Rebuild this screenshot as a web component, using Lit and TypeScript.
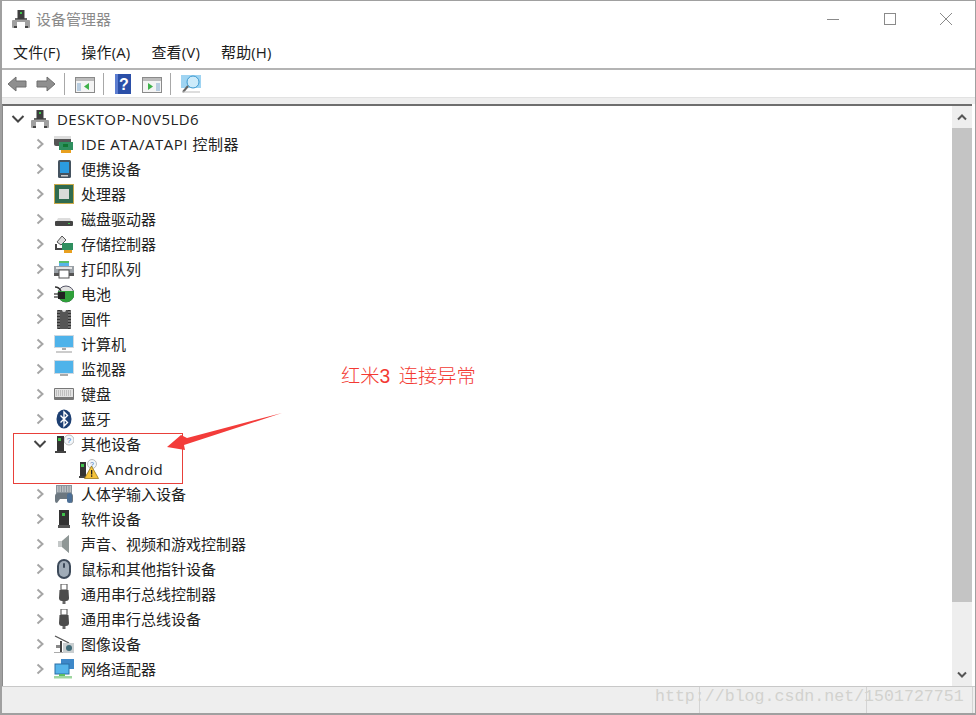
import { LitElement, html, css, svg } from "lit";
import { customElement } from "lit/decorators.js";

const icons: Record<string, any> = {
  computer: svg`<rect x="4" y="9" width="12" height="4" fill="#6b6b6b"/><rect x="6.500" y="1" width="7" height="9" fill="#3d3d3d"/><rect x="9" y="3" width="2" height="2" fill="#3fc24a"/><rect x="1" y="11" width="18" height="8" rx="1" fill="#a0a0a0"/><rect x="6" y="13" width="8" height="6" fill="#fff"/><rect x="3" y="17" width="3" height="2" fill="#444"/><rect x="14" y="17" width="3" height="2" fill="#444"/>`,
  ide: svg`<rect x="0" y="2" width="17" height="10" rx="2" fill="#555"/><rect x="0" y="2" width="17" height="3" fill="#ddd"/><rect x="5" y="8" width="14" height="8" fill="#2f8f5f"/><rect x="9" y="10" width="5" height="3" fill="#173"/><rect x="7" y="16" width="10" height="3" fill="#e8a020"/>`,
  portable: svg`<rect x="4" y="1" width="13" height="18" rx="1.500" fill="#44525f"/><rect x="6" y="3" width="9" height="11" fill="#2b9be0"/><rect x="7" y="16" width="7" height="1.500" fill="#ccc"/>`,
  cpu: svg`<rect x="0" y="0" width="20" height="20" fill="#c9a94a"/><rect x="1" y="1" width="18" height="18" fill="#2f6b4f"/><rect x="5" y="5" width="10" height="10" fill="#d8dcd8"/>`,
  disk: svg`<path d="M4 9h12l2 4H2z" fill="#ddd"/><rect x="1" y="12" width="18" height="5" rx="1" fill="#444"/><rect x="14" y="14" width="2" height="1" fill="#3fc24a"/>`,
  storage: svg`<path d="M3 8l5-6 4 4-5 5z" fill="#ddd" stroke="#555"/><path d="M2 10v5h6" fill="none" stroke="#444" stroke-width="2"/><rect x="8" y="9" width="11" height="7" fill="#2f8f5f"/><rect x="10" y="16" width="8" height="3" fill="#e8a020"/>`,
  printer: svg`<rect x="5" y="2" width="10" height="5" fill="#58b4e8"/><rect x="5" y="2" width="10" height="2" fill="#59c16a"/><rect x="0" y="7" width="20" height="7" fill="#9aa0a6"/><rect x="2" y="8" width="16" height="2" fill="#e6e6e6"/><rect x="5" y="11" width="10" height="8" fill="#fff" stroke="#555"/><rect x="0" y="14" width="5" height="3" fill="#555"/><rect x="15" y="14" width="5" height="3" fill="#555"/>`,
  battery: svg`<circle cx="12" cy="10" r="8" fill="#e2e2e2" stroke="#556"/><path d="M4.300 7h15.400a8 8 0 0 1-7.700 11a8 8 0 0 1-7.700-11z" fill="#2fa03a"/><path d="M1 3q4 0 6 4" fill="none" stroke="#333" stroke-width="1.500"/><rect x="4" y="8" width="7" height="7" fill="#222"/><path d="M0 10h4M0 13h4" stroke="#555" stroke-width="1.500"/>`,
  firmware: svg`<rect x="3" y="1" width="14" height="19" rx="1" fill="#333"/><rect x="6" y="1" width="8" height="19" fill="#555"/><path d="M3 3h14M3 6h14M3 9h14M3 12h14M3 15h14M3 18h14" stroke="#ccc" stroke-width=".8" stroke-dasharray="3 8"/><path d="M8 1a2 2 0 0 0 4 0z" fill="#ddd"/>`,
  pc: svg`<rect x="0" y="1" width="20" height="13" fill="#cfd8e0"/><rect x="1" y="2" width="18" height="11" fill="#4fb3ea"/><rect x="8" y="14" width="4" height="2" fill="#aaa"/><rect x="2" y="17" width="16" height="2" fill="#ccc"/>`,
  monitor: svg`<rect x="0" y="1" width="20" height="14" fill="#cfd8e0"/><rect x="1" y="2" width="18" height="12" fill="#4fb3ea"/><rect x="6" y="15" width="8" height="2" fill="#aaa"/>`,
  keyboard: svg`<rect x="0" y="4" width="20" height="12" rx="1" fill="#777"/><rect x="1" y="5" width="18" height="8" fill="#e2e2e2"/><path d="M2 7h16M2 9h16M2 11h16" stroke="#9a9a9a" stroke-dasharray="1 1"/>`,
  bt: svg`<ellipse cx="10" cy="10" rx="7.500" ry="9.500" fill="#1d3f72"/><path d="M6.500 6.500l7 7-3.500 3.500V3l3.500 3.500-7 7" fill="none" stroke="#fff" stroke-width="1.400"/>`,
  other: svg`<circle cx="15" cy="6" r="5" fill="#f2f6fa" stroke="#bbb"/><text x="15" y="9" font-size="8" text-anchor="middle" fill="#3d72b5" font-family="Liberation Sans">?</text><rect x="3" y="2" width="7" height="15" fill="#333"/><rect x="4" y="4" width="3" height="3" fill="#3fc24a"/><rect x="1" y="17" width="11" height="2" fill="#444"/>`,
  warn: svg`<circle cx="13" cy="5" r="4.500" fill="#f2f6fa" stroke="#bbb"/><text x="13" y="8" font-size="7" text-anchor="middle" fill="#3d72b5" font-family="Liberation Sans">?</text><rect x="1" y="3" width="6" height="14" fill="#333"/><rect x="2" y="5" width="3" height="3" fill="#3fc24a"/><rect x="0" y="17" width="8" height="2" fill="#444"/><path d="M12.500 7L19.500 19.500H5.500z" fill="#f5c33b" stroke="#8a6a10" stroke-width=".7"/><rect x="12" y="11" width="1.300" height="4.500" fill="#222"/><rect x="12" y="16.300" width="1.300" height="1.500" fill="#222"/>`,
  hid: svg`<rect x="2" y="1" width="16" height="9" fill="#8a949c"/><path d="M3 3h14M3 5h14M3 7h14" stroke="#e8e8e8" stroke-dasharray="1.500 1"/><path d="M1 12q0-3 4-3h10q4 0 4 3v5q0 2-2 2l-3-4H6l-3 4q-2 0-2-2z" fill="#6c7780"/><rect x="13" y="9" width="5" height="10" rx="2.500" fill="#4c6f96"/>`,
  software: svg`<rect x="5" y="1" width="10" height="15" fill="#333"/><rect x="8" y="4" width="3" height="3" fill="#3fc24a"/><rect x="4" y="16" width="12" height="3" fill="#555"/>`,
  sound: svg`<path d="M4 7h4l7-6v18l-7-6H4z" fill="#c4c8c8"/><path d="M8 7l7-6v18l-7-6z" fill="#8f9796"/>`,
  mouse: svg`<rect x="3" y="0" width="14" height="20" rx="7" fill="#3d4a5a"/><rect x="5" y="2" width="10" height="16" rx="5" fill="#a0acb8"/><rect x="9" y="4" width="2" height="5" rx="1" fill="#3d4a5a"/>`,
  usb: svg`<rect x="7" y="0" width="6" height="6" fill="none" stroke="#666" stroke-width="1.200"/><path d="M5.500 6h9l.5 8q0 3-3 3H8q-3 0-3-3z" fill="#4c4c4c"/><rect x="8.500" y="17" width="3" height="3" fill="#666"/>`,
  camera: svg`<path d="M1 2l14 7" stroke="#555" stroke-width="1.300"/><rect x="2" y="11" width="6" height="3" fill="#888"/><rect x="6" y="7" width="2" height="11" fill="#444"/><rect x="9" y="9" width="11" height="10" fill="#c9ced0"/><circle cx="15" cy="14" r="3" fill="#3f6b78"/><rect x="0" y="18" width="9" height="1" fill="#aaa"/>`,
  net: svg`<rect x="7" y="0" width="13" height="10" fill="#3d88c9"/><rect x="1" y="5" width="14" height="10" fill="#55b4ea" stroke="#2a6ea6"/><rect x="5" y="15" width="6" height="2" fill="#5fbf5f"/><rect x="0" y="17" width="18" height="2.500" fill="#9fd69f"/>`,
};

const rows: [string, string, number?, boolean?][] = [
  ["IDE ATA/ATAPI 控制器", "ide"], ["便携设备", "portable"], ["处理器", "cpu"], ["磁盘驱动器", "disk"],
  ["存储控制器", "storage"], ["打印队列", "printer"], ["电池", "battery"], ["固件", "firmware"],
  ["计算机", "pc"], ["监视器", "monitor"], ["键盘", "keyboard"], ["蓝牙", "bt"],
  ["其他设备", "other", 0, true], ["Android", "warn", 1], ["人体学输入设备", "hid"], ["软件设备", "software"],
  ["声音、视频和游戏控制器", "sound"], ["鼠标和其他指针设备", "mouse"], ["通用串行总线控制器", "usb"], ["通用串行总线设备", "usb"],
  ["图像设备", "camera"], ["网络适配器", "net"],
];

const chevR = html`<svg width="12" height="14" viewBox="0 0 12 14"><path d="M3.500 2.500L8.500 7l-5 4.500" fill="none" stroke="#a6a6a6" stroke-width="2"/></svg>`;
const chevD = html`<svg width="14" height="12" viewBox="0 0 14 12"><path d="M1.500 3L7 8.500 12.500 3" fill="none" stroke="#444" stroke-width="2"/></svg>`;
const ic = (n: string) => html`<svg class="ic" width="20" height="20" viewBox="0 0 20 20">${icons[n]}</svg>`;

@customElement("app-root")
export class AppRoot extends LitElement {
  static styles = css`
    :host { display: block; width: 976px; height: 715px; position: relative; overflow: hidden; background: #fff;
      font-family: "Open Sans", "Noto Sans CJK SC", sans-serif; font-size: 15px; color: #222; box-sizing: border-box; }
    .win { height: 715px; box-sizing: border-box; border: 1px solid #a0a0a0; border-width: 1px 1px 2px 2px; display: flex; flex-direction: column; }
    .title { height: 37px; box-sizing: border-box; padding: 0 22px 2px 9px; display: flex; align-items: center; gap: 5px; flex: none; color: #8a8a8a; }
    .title .t { flex: 1; }
    .wc { display: flex; align-items: center; gap: 42.500px; }
    .menu { height: 30px; box-sizing: content-box; display: flex; align-items: center; gap: 21px; padding-left: 11px; flex: none; color: #1c1c1c; border-bottom: 2px solid #b4b4b4; letter-spacing: .15px; }
    .menu span { margin-top: -3px; }
    .tools { height: 27px; display: flex; align-items: center; padding-left: 5px; flex: none; }
    .sep { width: 1px; height: 22px; background: #a8a8a8; margin-left: 8px; }
    .m9 { margin-left: 9px; }
    .m10 { margin-left: 10px; }
    .band { height: 7px; background: #eeeeee; flex: none; border-top: 1px solid #e2e2e2; box-sizing: border-box; }
    .body { flex: 1; min-height: 0; display: flex; border-top: 2px solid #6e6e6e; border-left: 1px solid #8a8a8a; margin-right: 3px; }
    .tree { flex: 1; overflow: hidden; }
    .row { height: 25px; display: flex; align-items: center; white-space: nowrap; }
    .branch { padding-left: 20px; }
    .chevbox { width: 30px; padding-left: 4px; box-sizing: border-box; display: flex; justify-content: center; flex: none; }
    .root .chevbox { width: 26px; }
    .row .ic { flex: none; margin: 0 7px 0 1px; }
    .root span { letter-spacing: .47px; }
    .lat span { letter-spacing: .5px; }
    .child { padding-left: 75px; }
    .child .ic { margin-right: 6px; }
    .child span { letter-spacing: .3px; }
    .sb { width: 20px; background: #eeeeee; display: flex; flex-direction: column; flex: none; }
    .btn { height: 22px; display: flex; align-items: center; justify-content: center; flex: none; }
    .track { flex: 1; display: flex; flex-direction: column; }
    .thumb { height: 474px; background: #c4c4c4; }
    .status { height: 26px; flex: none; background: #eeeeee; border-top: 1px solid #c8c8c8; display: flex; justify-content: flex-end; }
    .status i { width: 1px; height: 26px; background: #d4d4d4; }
    .status i.a { margin-right: 166px; }
    .status i.b { margin-right: 105px; }
    .status i.c { margin-right: 2px; }
    .redbox { position: absolute; left: 13px; top: 433px; width: 168px; height: 49px; border: 1px solid #e8403a; }
    .note { position: absolute; left: 341px; top: 365px; color: #f33a33; font-family: "Liberation Sans", "Noto Sans CJK SC", sans-serif; font-size: 19.300px; font-weight: 300; line-height: 24px; word-spacing: 3px; white-space: nowrap; }
    .arrow { position: absolute; left: 160px; top: 405px; }
    .wm { position: absolute; left: 655px; top: 685px; font-family: "Liberation Mono", monospace; font-size: 16.600px; line-height: 24px; color: #d2d2ce; white-space: nowrap; }
  `;

  render() {
    return html`
      <div class="win">
        <div class="title">
          ${ic("computer")}
          <span class="t">设备管理器</span>
          <div class="wc">
            <svg width="14" height="14" viewBox="0 0 14 14"><path d="M1 7.500h12" stroke="#8a8a8a"/></svg>
            <svg width="14" height="14" viewBox="0 0 14 14"><rect x="1.500" y="1.500" width="11" height="11" fill="none" stroke="#8a8a8a"/></svg>
            <svg width="14" height="14" viewBox="0 0 14 14"><path d="M1 1l12 12M13 1L1 13" stroke="#8a8a8a"/></svg>
          </div>
        </div>
        <div class="menu"><span>文件(F)</span><span>操作(A)</span><span>查看(V)</span><span>帮助(H)</span></div>
        <div class="tools">
          <svg width="20" height="20" viewBox="0 0 20 20"><path d="M1 10l8-7v4h10v6H9v4z" fill="#8f8f8f" stroke="#6f6f6f"/></svg>
          <svg class="m9" width="20" height="20" viewBox="0 0 20 20"><path d="M19 10l-8-7v4H1v6h10v4z" fill="#8f8f8f" stroke="#6f6f6f"/></svg>
          <div class="sep"></div>
          <svg class="m10" width="20" height="20" viewBox="0 0 20 20"><rect x=".5" y="3.500" width="19" height="15" fill="#f4f4f4" stroke="#8a8a8a"/><rect x="1" y="4" width="18" height="3" fill="#bbb"/><rect x="2" y="9" width="4" height="8" fill="#b8cde0"/><path d="M14 9l-5 3.500 5 3.500z" fill="#3fb24a"/></svg>
          <div class="sep"></div>
          <svg class="m9" width="20" height="22" viewBox="0 0 20 22"><rect x="2" y="1" width="16" height="20" fill="#2b4fa8"/><rect x="2" y="1" width="3" height="20" fill="#5c7dd0"/><text x="11" y="17" font-size="16" font-weight="bold" text-anchor="middle" fill="#fff" font-family="Liberation Sans">?</text></svg>
          <svg class="m9" width="20" height="20" viewBox="0 0 20 20"><rect x=".5" y="3.500" width="19" height="15" fill="#f4f4f4" stroke="#8a8a8a"/><rect x="1" y="4" width="18" height="3" fill="#bbb"/><rect x="14" y="9" width="4" height="8" fill="#b8cde0"/><path d="M6 9l5 3.500-5 3.500z" fill="#3fb24a"/></svg>
          <div class="sep"></div>
          <svg class="m10" width="20" height="20" viewBox="0 0 20 20"><rect x="0" y="1" width="20" height="13" fill="#9fd4f2"/><circle cx="12" cy="8" r="6" fill="#cdebfa" stroke="#3d9ad0"/><path d="M7 12l-5 6" stroke="#666" stroke-width="2"/><path d="M1 18h18" stroke="#bbb"/></svg>
        </div>
        <div class="band"></div>
        <div class="body">
          <div class="tree">
            <div class="row root"><div class="chevbox">${chevD}</div>${ic("computer")}<span>DESKTOP-N0V5LD6</span></div>
            ${rows.map(([label, icon, depth, open]) => depth
              ? html`<div class="row child">${ic(icon)}<span>${label}</span></div>`
              : html`<div class="row branch ${icon === "ide" ? "lat" : ""}"><div class="chevbox">${open ? chevD : chevR}</div>${ic(icon)}<span>${label}</span></div>`)}
          </div>
          <div class="sb">
            <div class="btn"><svg width="12" height="8" viewBox="0 0 12 8"><path d="M2 6.500l4-4 4 4" fill="none" stroke="#555" stroke-width="2"/></svg></div>
            <div class="track"><div class="thumb"></div></div>
            <div class="btn"><svg width="12" height="8" viewBox="0 0 12 8"><path d="M2 1.500l4 4 4-4" fill="none" stroke="#555" stroke-width="2"/></svg></div>
          </div>
        </div>
        <div class="status"><i class="a"></i><i class="b"></i><i class="c"></i></div>
      </div>
      <div class="redbox"></div>
      <div class="note">红米3 连接异常</div>
      <svg class="arrow" width="125" height="50" viewBox="160 405 125 50"><path d="M282 413L187 438 181 435 167 447 185 450 184 445z" fill="#f33c3a"/></svg>
      <div class="wm">http://blog.csdn.net/1501727751</div>
    `;
  }
}
